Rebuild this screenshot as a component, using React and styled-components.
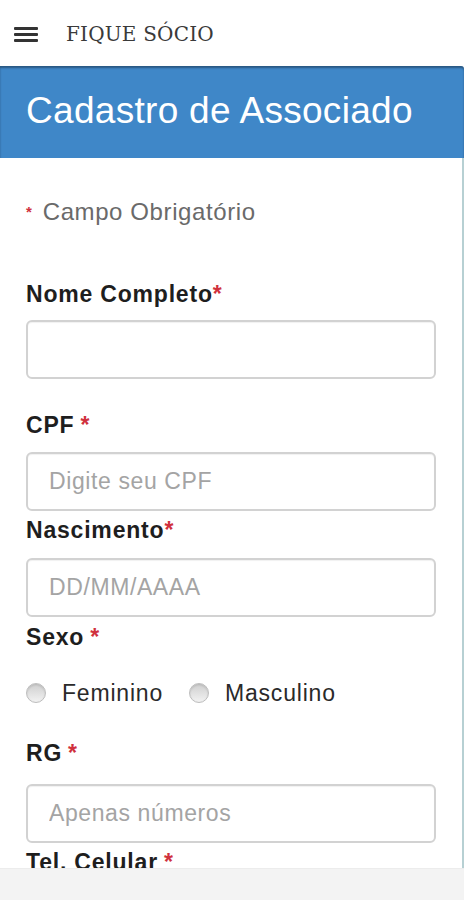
import React from "react";
import styled, { createGlobalStyle } from "styled-components";

const GlobalStyle = createGlobalStyle`
  html, body {
    margin: 0;
    padding: 0;
    background: #ffffff;
    font-family: "Liberation Sans", Arial, sans-serif;
  }
  * {
    box-sizing: border-box;
  }
`;

const Page = styled.div`
  width: 464px;
  height: 900px;
  overflow: hidden;
  position: relative;
  background: #ffffff;
`;

const TopBar = styled.div`
  height: 66px;
  display: flex;
  align-items: center;
  padding-left: 14px;
  gap: 28px;
  background: #ffffff;
`;

const Burger = styled.div`
  width: 24px;
  display: flex;
  flex-direction: column;
  gap: 3px;
  margin-top: 2px;
  span {
    display: block;
    height: 3px;
    background: #333;
    border-radius: 1px;
  }
`;

const Brand = styled.div`
  font-family: "DejaVu Serif", "Liberation Serif", serif;
  font-size: 20px;
  color: #3a3a3a;
  letter-spacing: 0.2px;
  margin-top: 2px;
`;

const Header = styled.div`
  height: 92px;
  background: #3f87c8;
  display: flex;
  align-items: center;
  padding-left: 26px;
  padding-bottom: 2px;
  color: #ffffff;
  font-size: 37px;
  letter-spacing: 0.3px;
  box-shadow: inset 0 2px 2px rgba(0, 0, 0, 0.35);
  border-top-right-radius: 3px;
`;

const Form = styled.div`
  padding: 42px 26px 0 26px;
  border-right: 2px solid #b7d0d3;
  height: 742px;
`;

const Note = styled.div`
  font-size: 24px;
  line-height: 24px;
  letter-spacing: 0.6px;
  color: #6a6a6a;
`;

const Star = styled.span`
  color: #d0313d;
  font-weight: bold;
  font-size: ${(p) => p.$size || "inherit"};
  margin-left: ${(p) => (p.$spaced ? "6px" : "0")};
  margin-right: ${(p) => (p.$size ? "3px" : "0")};
  vertical-align: ${(p) => (p.$size ? "3px" : "baseline")};
`;

const Label = styled.div`
  font-size: 23px;
  line-height: 24px;
  letter-spacing: 0.8px;
  font-weight: bold;
  color: #1e1e1e;
  margin-top: ${(p) => p.$top}px;
`;

const Input = styled.input`
  display: block;
  width: 410px;
  height: 59px;
  margin-top: ${(p) => p.$top}px;
  border: 2px solid #d2d2d2;
  border-radius: 6px;
  padding: 0 21px;
  font-family: "Liberation Sans", Arial, sans-serif;
  font-size: 23px;
  letter-spacing: 0.6px;
  color: #333;
  outline: none;
  box-shadow: inset 0 1px 1px rgba(0, 0, 0, 0.06);
  &::placeholder {
    color: #a4a4a4;
  }
`;

const RadioRow = styled.div`
  display: flex;
  align-items: center;
  height: 24px;
  margin-top: 32px;
`;

const RadioOption = styled.label`
  display: flex;
  align-items: center;
  gap: 16px;
  font-size: 23px;
  letter-spacing: 0.8px;
  color: #2a2a2a;
  margin-right: 26px;
`;

const RadioDot = styled.span`
  width: 20px;
  height: 20px;
  border-radius: 50%;
  border: 1px solid #bdbdbd;
  background: linear-gradient(#cfcfcf, #f2f2f2);
  box-shadow: inset 0 1px 2px rgba(0, 0, 0, 0.12);
`;

const BottomBar = styled.div`
  position: absolute;
  left: 0;
  right: 0;
  bottom: 0;
  height: 32px;
  background: #f3f3f3;
  border-top: 1px solid #ececec;
`;

const fields = [
  { label: "Nome Completo", spaced: false, labelTop: 58, inputTop: 14, ph: "" },
  { label: "CPF", spaced: true, labelTop: 34, inputTop: 15, ph: "Digite seu CPF" },
  { label: "Nascimento", spaced: false, labelTop: 7, inputTop: 16, ph: "DD/MM/AAAA" },
];

export default function App() {
  return (
    <Page>
      <GlobalStyle />
      <TopBar>
        <Burger>
          <span />
          <span />
          <span />
        </Burger>
        <Brand>FIQUE SÓCIO</Brand>
      </TopBar>
      <Header>Cadastro de Associado</Header>
      <Form>
        <Note>
          <Star $size="15px">*</Star> Campo Obrigatório
        </Note>
        {fields.map((f) => (
          <React.Fragment key={f.label}>
            <Label $top={f.labelTop}>
              {f.label}
              <Star $spaced={f.spaced}>*</Star>
            </Label>
            <Input $top={f.inputTop} placeholder={f.ph} />
          </React.Fragment>
        ))}
        <Label $top={8}>
          Sexo<Star $spaced>*</Star>
        </Label>
        <RadioRow>
          <RadioOption>
            <RadioDot />
            Feminino
          </RadioOption>
          <RadioOption>
            <RadioDot />
            Masculino
          </RadioOption>
        </RadioRow>
        <Label $top={36}>
          RG<Star $spaced>*</Star>
        </Label>
        <Input $top={19} placeholder="Apenas números" />
        <Label $top={7}>
          Tel. Celular<Star $spaced>*</Star>
        </Label>
      </Form>
      <BottomBar />
    </Page>
  );
}
